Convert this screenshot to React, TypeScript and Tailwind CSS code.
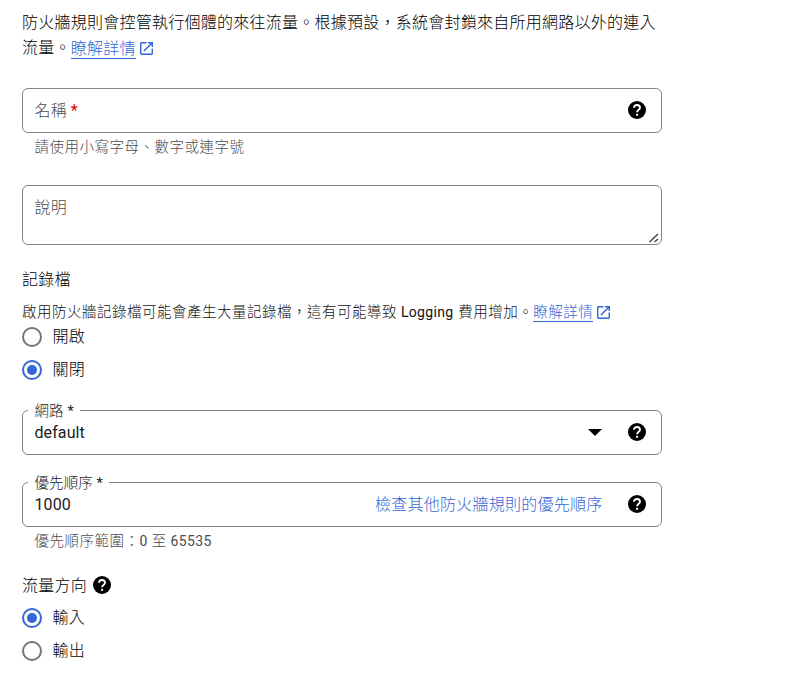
import type { ReactNode } from 'react';

function HelpIcon({ className = '' }: { className?: string }) {
  return (
    <svg viewBox="2 2 20 20" className={`h-[18px] w-[18px] shrink-0 ${className}`} aria-hidden="true">
      <circle cx="12" cy="12" r="10" fill="#000" />
      <path
        d="M8.7 9.6C8.7 7.7 10.1 6.4 12 6.4S15.3 7.7 15.3 9.4C15.3 11.7 12.1 12 12.1 14.5"
        fill="none"
        stroke="#fff"
        strokeWidth="2.1"
      />
      <rect x="11" y="16.2" width="2.2" height="2.2" fill="#fff" />
    </svg>
  );
}

function LaunchIcon({ className = '' }: { className?: string }) {
  return (
    <svg viewBox="3 3 18 18" className={`ml-1 h-[13px] w-[13px] shrink-0 ${className}`} aria-hidden="true">
      <path
        fill="#3367d6"
        d="M19 19H5V5h7V3H5a2 2 0 0 0-2 2v14a2 2 0 0 0 2 2h14c1.1 0 2-.9 2-2v-7h-2v7zM14 3v2h3.59l-9.83 9.83 1.41 1.41L19 6.41V10h2V3h-7z"
      />
    </svg>
  );
}

function Link({ children, className = '' }: { children: ReactNode; className?: string }) {
  return (
    <a href="#" className={`border-b border-[#3367d6] text-[#3367d6] ${className}`}>
      {children}
    </a>
  );
}

function Radio({ label, checked = false }: { label: string; checked?: boolean }) {
  return (
    <label className="flex h-5 items-center">
      <span
        className={`flex h-5 w-5 items-center justify-center rounded-full border-2 ${
          checked ? 'border-[#3367d6]' : 'border-[#757575]'
        }`}
      >
        {checked && <span className="h-2.5 w-2.5 rounded-full bg-[#3367d6]" />}
      </span>
      <span className="ml-[10.5px] text-black">{label}</span>
    </label>
  );
}

function FloatingLabel({ children }: { children: ReactNode }) {
  return (
    <span className="absolute -top-2 left-[5px] bg-white pr-[6px] pl-[6.5px] text-[14.5px] leading-[18px] tracking-[0.1px] text-[#222]">
      {children}
      <span className="font-normal"> *</span>
    </span>
  );
}

const field = 'relative flex h-[45px] items-center rounded-[6px] border border-[#80868b] pr-[15px] pl-[11.5px]';

export default function App() {
  return (
    <main
      lang="zh-Hant"
      className="h-[673px] w-[806px] overflow-hidden bg-white pt-[10px] pl-[22px] font-['Roboto','Noto_Sans_CJK_TC',sans-serif] text-[16px] font-light tracking-[0.25px] text-black"
    >
      <div className="flex w-[640px] flex-col">
        <div className="h-[78px] leading-[25px] whitespace-nowrap">
          <p>防火牆規則會控管執行個體的來往流量。根據預設，系統會封鎖來自所用網路以外的連入</p>
          <p className="flex items-center">
            流量。
            <Link className="mb-px h-[23px] leading-[25px]">瞭解詳情</Link>
            <LaunchIcon className="mt-px" />
          </p>
        </div>

        <div className={field}>
          <span className="flex-1 text-[#4a4d51]">
            名稱<span className="-ml-[0.5px] font-normal text-[#e00000]"> *</span>
          </span>
          <HelpIcon className="mb-px" />
        </div>
        <p className="mt-[5px] h-[19px] pl-[12.5px] text-[14.5px] leading-5 tracking-[0.5px] text-[#4a4d51]">
          請使用小寫字母、數字或連字號
        </p>

        <div className="relative mt-7 h-[60px] rounded-[6px] border border-[#80868b] pt-[9px] pl-[11.5px] leading-[25px] text-[#4a4d51]">
          說明
          <svg viewBox="0 0 10 10" className="absolute right-[2px] bottom-[1px] h-2.5 w-2.5" aria-hidden="true">
            <path d="M0.5 9L9 1M5.5 9L9 6" stroke="#444" strokeWidth="1.5" />
          </svg>
        </div>

        <h3 className="mt-[22px] h-6 leading-[26px]">記錄檔</h3>
        <p className="mt-2.5 flex h-[22px] items-center text-[14.5px] leading-[22px] tracking-[0.5px] whitespace-nowrap text-[#111]">
          <span className="mt-px">啟用防火牆記錄檔可能會產生大量記錄檔，這有可能導致</span>
          <span className="mr-[5px] ml-[4px] text-[14px] font-normal tracking-[0.3px]">Logging</span>
          <span className="mt-px">費用增加。</span>
          <Link className="mb-px h-[20px] leading-[21px]">瞭解詳情</Link>
          <LaunchIcon />
        </p>
        <div className="mt-[4px] flex flex-col gap-[13px]">
          <Radio label="開啟" />
          <Radio label="關閉" checked />
        </div>

        <div className={`mt-[30px] ${field}`}>
          <FloatingLabel>網路</FloatingLabel>
          <span className="flex-1 font-normal tracking-[0.1px] text-[#202124]">default</span>
          <svg viewBox="0 0 14 7" className="mr-[26px] h-[7px] w-[14px]" aria-hidden="true">
            <path d="M0 0H14L7 7Z" fill="#000" />
          </svg>
          <HelpIcon className="mb-px" />
        </div>

        <div className={`mt-[27px] ${field}`}>
          <FloatingLabel>優先順序</FloatingLabel>
          <span className="flex-1 font-normal tracking-[0.1px] text-[#202124]">1000</span>
          <a href="#" className="mr-[25.5px] text-[#3367d6]">
            檢查其他防火牆規則的優先順序
          </a>
          <HelpIcon className="mb-px" />
        </div>
        <p className="mt-1 h-5 pl-[12.5px] text-[14.5px] leading-5 tracking-[0.5px] text-[#4a4d51]">
          優先順序範圍：
          <span className="text-[14px] font-normal tracking-[0.4px]">0 </span>至
          <span className="text-[14px] font-normal tracking-[0.4px]"> 65535</span>
        </p>

        <div className="mt-[22px] flex h-6 items-center leading-6">
          <span className="mt-px">流量方向</span>
          <HelpIcon className="ml-[6px]" />
        </div>
        <div className="mt-[11px] flex flex-col gap-[13px]">
          <Radio label="輸入" checked />
          <Radio label="輸出" />
        </div>
      </div>
    </main>
  );
}
